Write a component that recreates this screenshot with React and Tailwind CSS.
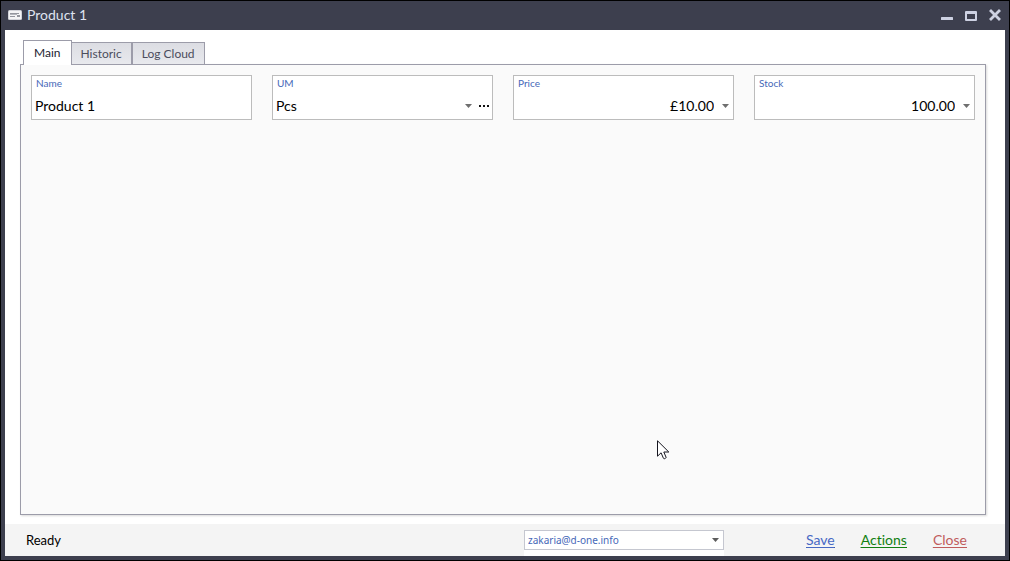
import React, { useState } from 'react';

const TABS = ['Main', 'Historic', 'Log Cloud'];

// ── Icons ────────────────────────────────────────────────────────────────────
const CardIcon = () => (
    <svg width="14" height="10" viewBox="0 0 14 10" aria-hidden="true">
        <rect x="0" y="0" width="14" height="10" rx="1.5" fill="#d2d3d9" />
        <rect x="1" y="1" width="12" height="8" rx="0.5" fill="#f4f4f6" />
        <rect x="2" y="3" width="9" height="1" fill="#94969e" />
        <rect x="2" y="4" width="7" height="1" fill="#b4b6bd" />
        <rect x="2" y="6" width="5" height="1" fill="#94969e" />
        <rect x="9" y="5" width="3" height="2" fill="#94969e" />
    </svg>
);

const MinimizeIcon = () => (
    <svg width="12" height="12" viewBox="0 0 12 12" aria-hidden="true">
        <rect x="0" y="8" width="12" height="3" rx="0.5" fill="#cdd1e2" />
    </svg>
);

const MaximizeIcon = () => (
    <svg width="12" height="12" viewBox="0 0 12 12" aria-hidden="true">
        <path fill="#cdd1e2" fillRule="evenodd" d="M1 2h10a1 1 0 0 1 1 1v8a1 1 0 0 1-1 1H1a1 1 0 0 1-1-1V3a1 1 0 0 1 1-1zM2 5v5h8V5z" />
    </svg>
);

const CloseIcon = () => (
    <svg width="12" height="12" viewBox="0 0 12 12" aria-hidden="true">
        <path d="M2 2l8 8M10 2l-8 8" stroke="#cdd1e2" strokeWidth="2.8" strokeLinecap="square" />
    </svg>
);

const ArrowIcon = ({ className }) => (
    <svg className={className} width="7" height="4" viewBox="0 0 7 4" aria-hidden="true">
        <path d="M0 0h7L3.5 4z" fill="currentColor" />
    </svg>
);

const DotsIcon = () => (
    <svg width="10" height="2" viewBox="0 0 10 2" aria-hidden="true">
        <path d="M0 0h2v2H0zM4 0h2v2H4zM8 0h2v2H8z" fill="#111" />
    </svg>
);

const Cursor = () => (
    <svg className="pointer-events-none absolute top-[439px] left-[656px]" width="13" height="20" viewBox="0 0 13 20" aria-hidden="true">
        <path d="M0.5 0.8v15.4l3.6-3.4 2.3 5.4q0.4 0.8 1.2 0.5l1-0.5q0.7-0.4 0.4-1.1L6.8 12h5z" fill="#fff" stroke="#15151f" />
    </svg>
);

// ── Form field with its caption on top ───────────────────────────────────────
const Field = ({ id, label, children }) => (
    <div className="flex h-[45px] min-w-0 flex-col border border-[#bcbcbc] bg-white">
        <label htmlFor={id} className="pl-1 text-[10px] leading-[14px] text-[#4668b8]">{label}</label>
        <div className="flex flex-1 items-center pt-[2px] pl-[3px] text-[14px] leading-[20px] text-black">
            {children}
        </div>
    </div>
);

const DropButton = ({ label }) => (
    <button type="button" aria-label={label} className="flex h-5 w-4 shrink-0 items-center justify-center text-[#6f6f6f]">
        <ArrowIcon />
    </button>
);

const MainForm = () => (
    <form className="grid grid-cols-4 gap-5 p-[10px]">
        <Field id="name" label="Name">
            <input id="name" defaultValue="Product 1" className="w-full min-w-0 outline-none" />
        </Field>
        <Field id="um" label="UM">
            <div className="relative flex min-w-0 flex-1 items-center">
                <select id="um" defaultValue="Pcs" className="w-full appearance-none outline-none">
                    <option>Pcs</option>
                </select>
                <ArrowIcon className="pointer-events-none absolute right-[4px] text-[#6f6f6f]" />
            </div>
            <button type="button" aria-label="More units" className="flex h-5 w-4 shrink-0 items-center justify-center">
                <DotsIcon />
            </button>
        </Field>
        <Field id="price" label="Price">
            <input id="price" defaultValue="£10.00" className="w-full min-w-0 pr-[3px] text-right outline-none" />
            <DropButton label="Open price calculator" />
        </Field>
        <Field id="stock" label="Stock">
            <input id="stock" defaultValue="100.00" className="w-full min-w-0 pr-[3px] text-right outline-none" />
            <DropButton label="Open stock calculator" />
        </Field>
    </form>
);

const App = () => {
    const [tab, setTab] = useState('Main');

    return (
        <div className="relative flex h-screen flex-col border border-black bg-[#3d3f4e] px-1 pb-1 font-['Lato','Liberation_Sans',sans-serif] [font-variant-ligatures:none]">
            <header className="flex h-[29px] shrink-0 items-center justify-between pr-1 pb-px pl-[3px]">
                <div className="flex items-center gap-[5px]">
                    <CardIcon />
                    <h1 className="text-[14px] leading-[20px] text-[#dfe3f0]">Product 1</h1>
                </div>
                <div className="flex items-center gap-3">
                    <button type="button" aria-label="Minimize"><MinimizeIcon /></button>
                    <button type="button" aria-label="Maximize"><MaximizeIcon /></button>
                    <button type="button" aria-label="Close window"><CloseIcon /></button>
                </div>
            </header>

            <main className="flex min-h-0 flex-1 flex-col bg-white pt-[10px] pr-[19px] pb-[9px] pl-[15px]">
                <div role="tablist" className="z-10 -mb-px flex items-end pl-[3px] text-[12px] leading-[20px]">
                    {TABS.map((name) => (
                        <button
                            key={name}
                            type="button"
                            role="tab"
                            aria-selected={tab === name}
                            onClick={() => setTab(name)}
                            className={tab === name
                                ? 'z-10 -mr-px h-[25px] border border-b-0 border-[#9c9ca9] bg-white px-[10px] text-[#222330]'
                                : 'h-[23px] border border-[#9c9ca9] bg-linear-to-b from-[#dcdde3] to-[#e8e9ed] px-[9px] text-[#4b4d5c]'}
                        >
                            {name}
                        </button>
                    ))}
                </div>
                <section role="tabpanel" className="min-h-0 flex-1 border border-[#9c9ca9] bg-[#fafafa] shadow-[1px_1px_2px_#00000026]">
                    {tab === 'Main' && <MainForm />}
                </section>
            </main>

            <footer className="flex h-8 shrink-0 items-center bg-[#f4f4f4] pr-[38px] pl-[21px] leading-[20px]">
                <p className="flex-1 text-[13px] text-black">Ready</p>
                <div className="relative h-[26px] w-[200px] self-end bg-white">
                    <select aria-label="Account" defaultValue="zakaria@d-one.info" className="block h-5 w-full appearance-none border border-[#c5c7d0] bg-white pl-[3px] font-['Noto_Sans','Open_Sans',sans-serif] text-[10px] leading-[16px] text-[#4668b8] outline-none">
                        <option>zakaria@d-one.info</option>
                    </select>
                    <ArrowIcon className="pointer-events-none absolute top-2 right-[5px] text-[#5c5c5c]" />
                </div>
                <nav className="ml-[82px] flex gap-[26px] text-[14px] underline underline-offset-2">
                    <a href="#save" className="text-[#4668c4]">Save</a>
                    <a href="#actions" className="text-[#118011]">Actions</a>
                    <a href="#close" className="text-[#c05c5c]">Close</a>
                </nav>
            </footer>

            <Cursor />
        </div>
    );
};

export default App;
